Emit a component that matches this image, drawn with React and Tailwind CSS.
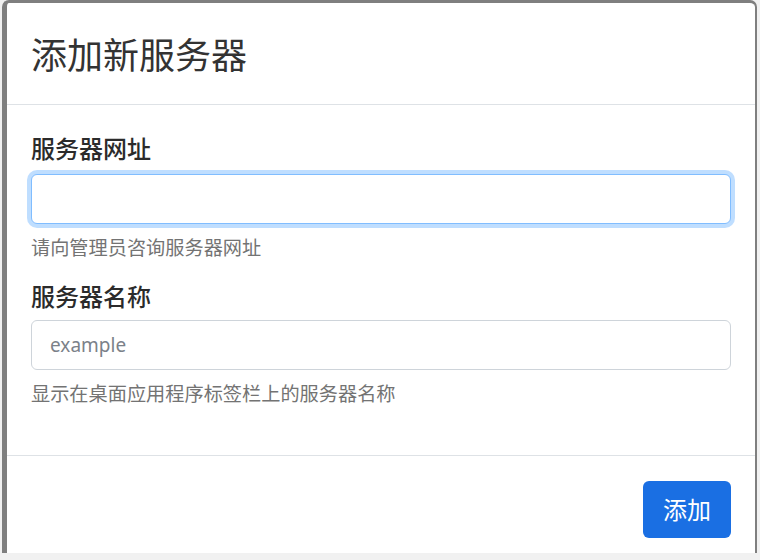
import { useState } from 'react';

const FONT = "font-['Noto_Sans','Noto_Sans_CJK_SC',sans-serif]";

function Field({ label, hint, placeholder, focused, value, onChange }) {
  return (
    <div className="flex flex-col">
      <label className="text-[24px] leading-[36px] font-medium text-[#2b2b2b]">{label}</label>
      <input
        value={value}
        onChange={onChange}
        placeholder={placeholder}
        className={
          focused
            ? 'mt-[7px] h-[50px] rounded-[6px] border border-[#80bdff] bg-white px-[18px] text-[19px] text-[#495057] outline-none shadow-[0_0_0_4px_rgba(0,123,255,0.25)]'
            : 'mt-[5px] h-[50px] rounded-[6px] border border-[#ced4da] bg-white px-[18px] text-[19px] text-[#495057] outline-none placeholder:text-[#7b8189]'
        }
      />
      <p className="mt-[10px] text-[19.2px] leading-[28px] text-[#737373]">{hint}</p>
    </div>
  );
}

export default function App() {
  const [url, setUrl] = useState('');
  const [name, setName] = useState('');

  return (
    <div className={`w-[760px] h-[560px] bg-[#f1f1f1] overflow-hidden ${FONT}`}>
      <div className="ml-[2px] w-[755px] h-[553px] bg-white border-l-[5px] border-t-[3px] border-r-[2px] border-[#7f7f7f] rounded-t-[7px] flex flex-col">
        {/* Header */}
        <div className="pt-[27px] pb-[22px] px-6 border-b border-[#dee2e6]">
          <h4 className="text-[36px] leading-[52px] font-normal text-[#333]">添加新服务器</h4>
        </div>

        {/* Body */}
        <div className="px-6 pt-[26px] pb-[47px] flex flex-col gap-[17px] border-b border-[#dee2e6]">
          <Field
            label="服务器网址"
            hint="请向管理员咨询服务器网址"
            focused
            value={url}
            onChange={e => setUrl(e.target.value)}
          />
          <Field
            label="服务器名称"
            hint="显示在桌面应用程序标签栏上的服务器名称"
            placeholder="example"
            value={name}
            onChange={e => setName(e.target.value)}
          />
        </div>

        {/* Footer */}
        <div className="flex justify-end px-6 pt-[25px]">
          <button className="w-[88px] h-[57px] rounded-[6px] bg-[#1a6fe3] text-white text-[24px]">
            添加
          </button>
        </div>
      </div>
    </div>
  );
}
